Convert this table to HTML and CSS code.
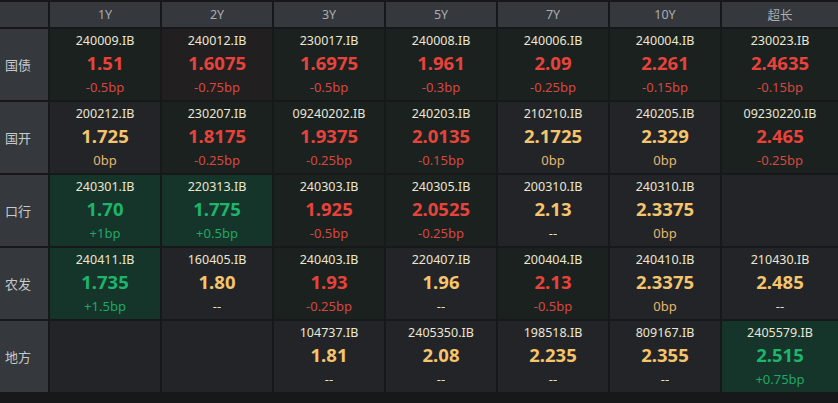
FILE: index.html
```html
<!DOCTYPE html>
<html lang="zh-CN">
<head>
  <meta charset="UTF-8">
  <title>收益率矩阵</title>
  <link rel="stylesheet" href="styles.css">
</head>
<body>
<div class="board">
  <div class="head"></div>
  <div class="head">1Y</div>
  <div class="head">2Y</div>
  <div class="head">3Y</div>
  <div class="head">5Y</div>
  <div class="head">7Y</div>
  <div class="head">10Y</div>
  <div class="head">超长</div>

  <!-- 国债 -->
  <div class="label">国债</div>
  <div class="cell down"><span class="code">240009.IB</span><span class="val red">1.51</span><span class="chg red">-0.5bp</span></div>
  <div class="cell down warm"><span class="code">240012.IB</span><span class="val red">1.6075</span><span class="chg red">-0.75bp</span></div>
  <div class="cell down"><span class="code">230017.IB</span><span class="val red">1.6975</span><span class="chg red">-0.5bp</span></div>
  <div class="cell down"><span class="code">240008.IB</span><span class="val red">1.961</span><span class="chg red">-0.3bp</span></div>
  <div class="cell down"><span class="code">240006.IB</span><span class="val red">2.09</span><span class="chg red">-0.25bp</span></div>
  <div class="cell down"><span class="code">240004.IB</span><span class="val red">2.261</span><span class="chg red">-0.15bp</span></div>
  <div class="cell down"><span class="code">230023.IB</span><span class="val red">2.4635</span><span class="chg red">-0.15bp</span></div>

  <!-- 国开 -->
  <div class="label">国开</div>
  <div class="cell"><span class="code">200212.IB</span><span class="val flat">1.725</span><span class="chg flat">0bp</span></div>
  <div class="cell down"><span class="code">230207.IB</span><span class="val red">1.8175</span><span class="chg red">-0.25bp</span></div>
  <div class="cell down"><span class="code">09240202.IB</span><span class="val red">1.9375</span><span class="chg red">-0.25bp</span></div>
  <div class="cell down"><span class="code">240203.IB</span><span class="val red">2.0135</span><span class="chg red">-0.15bp</span></div>
  <div class="cell"><span class="code">210210.IB</span><span class="val flat">2.1725</span><span class="chg flat">0bp</span></div>
  <div class="cell"><span class="code">240205.IB</span><span class="val flat">2.329</span><span class="chg flat">0bp</span></div>
  <div class="cell down"><span class="code">09230220.IB</span><span class="val red">2.465</span><span class="chg red">-0.25bp</span></div>

  <!-- 口行 -->
  <div class="label">口行</div>
  <div class="cell up"><span class="code">240301.IB</span><span class="val green">1.70</span><span class="chg green">+1bp</span></div>
  <div class="cell up"><span class="code">220313.IB</span><span class="val green">1.775</span><span class="chg green">+0.5bp</span></div>
  <div class="cell down"><span class="code">240303.IB</span><span class="val red">1.925</span><span class="chg red">-0.5bp</span></div>
  <div class="cell down"><span class="code">240305.IB</span><span class="val red">2.0525</span><span class="chg red">-0.25bp</span></div>
  <div class="cell"><span class="code">200310.IB</span><span class="val flat">2.13</span><span class="chg none">--</span></div>
  <div class="cell"><span class="code">240310.IB</span><span class="val flat">2.3375</span><span class="chg flat">0bp</span></div>
  <div class="cell"></div>

  <!-- 农发 -->
  <div class="label">农发</div>
  <div class="cell up"><span class="code">240411.IB</span><span class="val green">1.735</span><span class="chg green">+1.5bp</span></div>
  <div class="cell"><span class="code">160405.IB</span><span class="val flat">1.80</span><span class="chg none">--</span></div>
  <div class="cell down"><span class="code">240403.IB</span><span class="val red">1.93</span><span class="chg red">-0.25bp</span></div>
  <div class="cell"><span class="code">220407.IB</span><span class="val flat">1.96</span><span class="chg none">--</span></div>
  <div class="cell down"><span class="code">200404.IB</span><span class="val red">2.13</span><span class="chg red">-0.5bp</span></div>
  <div class="cell"><span class="code">240410.IB</span><span class="val flat">2.3375</span><span class="chg flat">0bp</span></div>
  <div class="cell"><span class="code">210430.IB</span><span class="val flat">2.485</span><span class="chg none">--</span></div>

  <!-- 地方 -->
  <div class="label">地方</div>
  <div class="cell"></div>
  <div class="cell"></div>
  <div class="cell"><span class="code">104737.IB</span><span class="val flat">1.81</span><span class="chg none">--</span></div>
  <div class="cell"><span class="code">2405350.IB</span><span class="val flat">2.08</span><span class="chg none">--</span></div>
  <div class="cell"><span class="code">198518.IB</span><span class="val flat">2.235</span><span class="chg none">--</span></div>
  <div class="cell"><span class="code">809167.IB</span><span class="val flat">2.355</span><span class="chg none">--</span></div>
  <div class="cell up"><span class="code">2405579.IB</span><span class="val green">2.515</span><span class="chg green">+0.75bp</span></div>
</div>
</body>
</html>
```

FILE: styles.css
```css
body {
  margin: 0;
  background-color: #17181a;
  font-family: "Noto Sans", "Noto Sans CJK SC", sans-serif;
  overflow: hidden;
}
.board {
  display: grid;
  grid-template-columns: 48px repeat(6, 110px) 116px;
  grid-template-rows: 25px repeat(5, 71px);
  gap: 2px;
  padding-top: 2px;
}
.head {
  background-color: #35383c;
  color: #a9aeb3;
  font-size: 12.5px;
  display: flex;
  align-items: center;
  justify-content: center;
}
.label {
  background-color: #35383c;
  color: #c6cacd;
  font-size: 13px;
  display: flex;
  align-items: center;
  padding-left: 5px;
}
.cell {
  background-color: #222427;
  display: flex;
  flex-direction: column;
  align-items: center;
  padding-top: 2px;
}
.cell.down {
  background-color: #1a211f;
}
.cell.down.warm {
  background-color: #211f1f;
}
.cell.up {
  background-color: #15342a;
}
.code {
  color: #ebe6d2;
  font-size: 12.5px;
  line-height: 19px;
}
.val {
  font-size: 18.5px;
  font-weight: bold;
  line-height: 26px;
}
.chg {
  font-size: 13px;
  line-height: 22px;
}
.red {
  color: #e8433b;
}
.chg.red {
  color: #d8473f;
}
.flat {
  color: #f5c46c;
}
.chg.flat {
  color: #e2b86c;
}
.green {
  color: #1db56b;
}
.chg.green {
  color: #20a865;
}
.none {
  color: #e8dfc4;
}
```
